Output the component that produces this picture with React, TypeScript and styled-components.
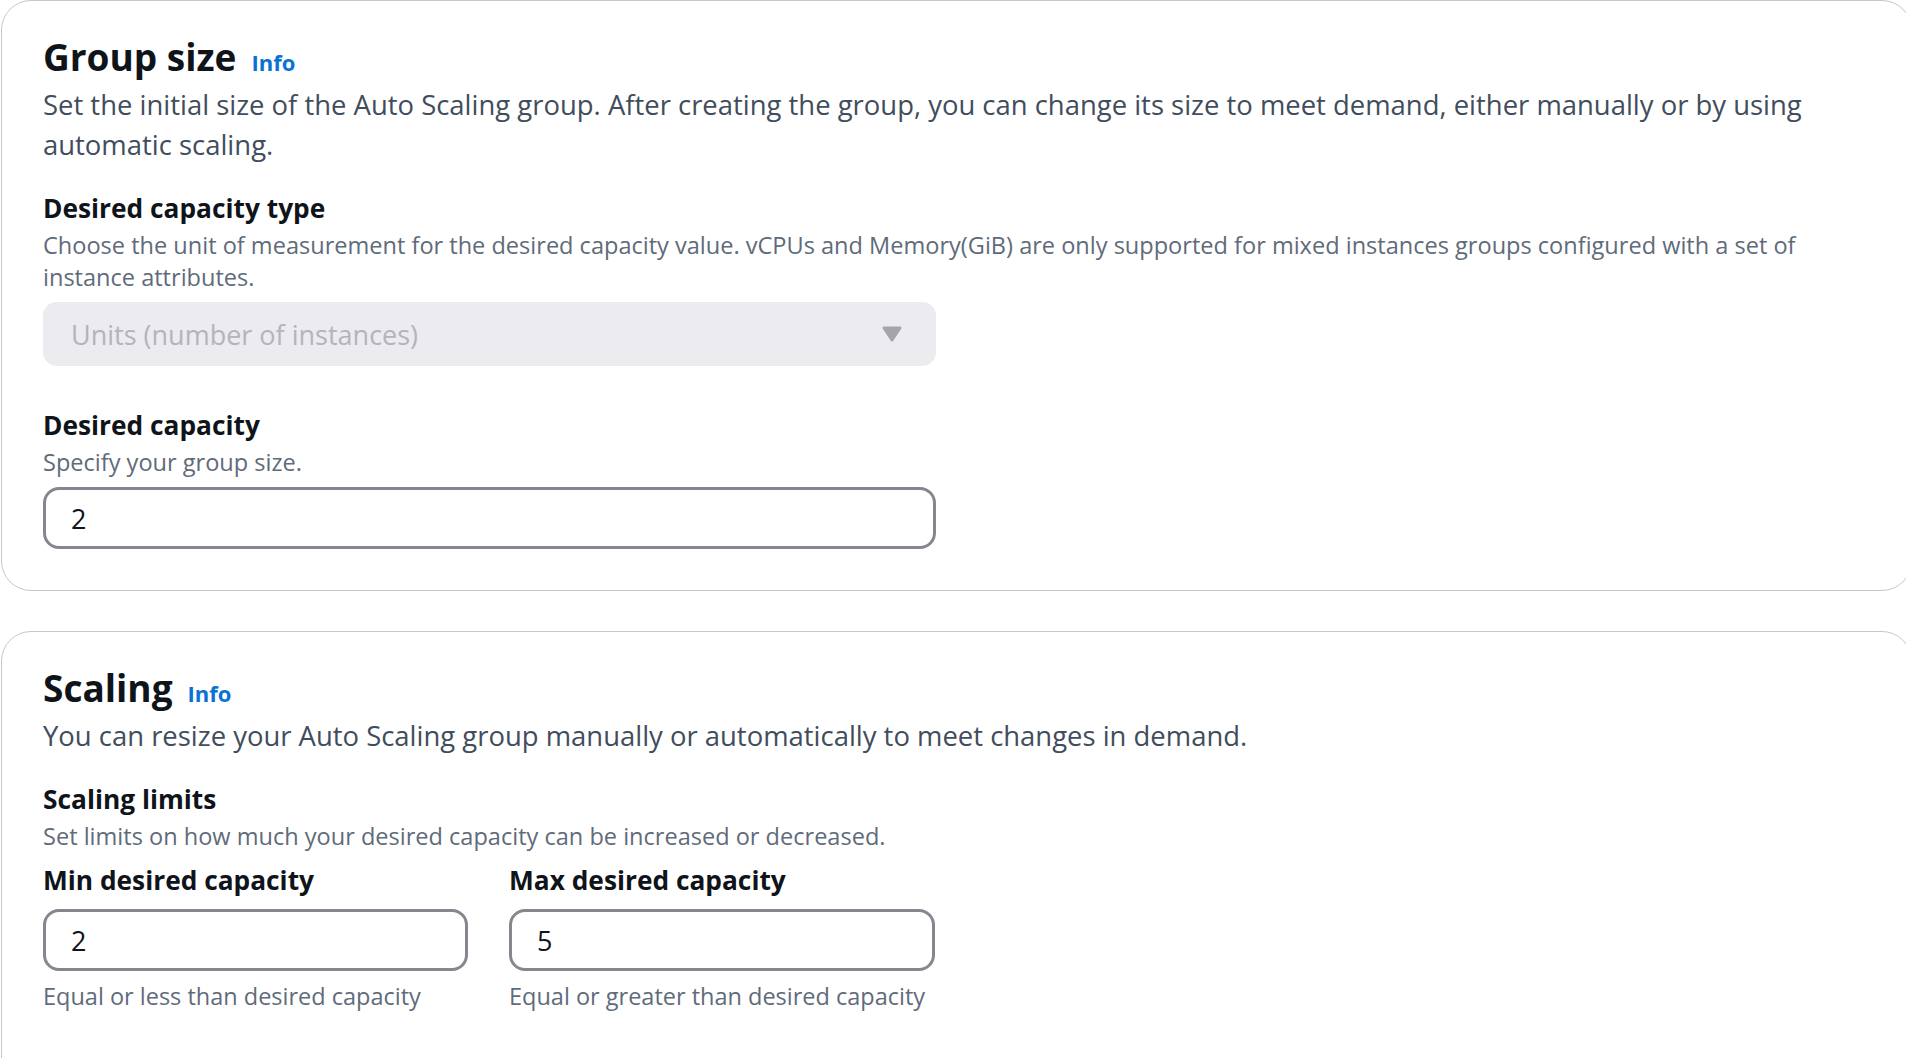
import styled, { createGlobalStyle } from "styled-components";

const GlobalStyle = createGlobalStyle`
  body {
    margin: 0;
    background: #ffffff;
    font-family: "Open Sans", "Noto Sans", Arial, sans-serif;
    color: #0f141a;
    overflow: hidden;
  }
`;

const Page = styled.div`
  display: flex;
  flex-direction: column;
  gap: 40px;
  height: 100vh;
  overflow: hidden;
  padding-left: 1px;
`;

const Card = styled.section<{ $bottom?: number }>`
  flex-shrink: 0;
  box-sizing: border-box;
  width: calc(100% + 6px);
  background: #ffffff;
  border: 1px solid #c6c6cd;
  border-radius: 30px;
  padding: 34px 44px ${(p) => p.$bottom ?? 41}px 41px;
`;

const HeaderRow = styled.div`
  display: flex;
  align-items: baseline;
  gap: 15px;
`;

const Title = styled.h2`
  margin: 0;
  font-size: 37px;
  line-height: 44px;
  font-weight: 700;
  color: #0f141a;
`;

const InfoLink = styled.a`
  font-size: 22px;
  font-weight: 700;
  color: #0972d3;
  text-decoration: none;
  cursor: pointer;
`;

const HeaderDescription = styled.p`
  margin: 6px 0 0;
  font-size: 27.45px;
  line-height: 40px;
  color: #414d5c;
`;

const Field = styled.div<{ $gap: number }>`
  margin-top: ${(p) => p.$gap}px;
`;

const FieldLabel = styled.div`
  font-size: 26.3px;
  line-height: 30px;
  font-weight: 700;
  color: #0f141a;
`;

const FieldDescription = styled.div`
  margin-top: 6px;
  font-size: 23.55px;
  line-height: 32px;
  color: #5f6b7a;
`;

const ControlSlot = styled.div<{ $gap: number }>`
  margin-top: ${(p) => p.$gap}px;
`;

const DisabledSelect = styled.div`
  box-sizing: border-box;
  width: 893px;
  height: 64px;
  display: flex;
  align-items: center;
  justify-content: space-between;
  padding: 0 34px 0 28px;
  background: #ebebf0;
  border-radius: 14px;
  font-size: 27px;
  color: #b4b4bb;
`;

const TextInput = styled.input<{ $width: number }>`
  box-sizing: border-box;
  display: block;
  width: ${(p) => p.$width}px;
  height: 62px;
  padding: 0 25px;
  border: 3px solid #86868e;
  border-radius: 16px;
  background: #ffffff;
  font-family: inherit;
  font-size: 27px;
  color: #0f141a;
  outline: none;
`;

const LimitsGrid = styled.div`
  display: grid;
  grid-template-columns: 425px 426px;
  column-gap: 41px;
  margin-top: 13px;
`;

const FieldHint = styled.div`
  margin-top: 9px;
  font-size: 23.5px;
  line-height: 32px;
  color: #5f6b7a;
`;

const Caret = () => (
  <svg width="20" height="16" viewBox="0 0 20 16">
    <polygon
      points="2,2 18,2 10,14"
      fill="#a4a4ad"
      stroke="#a4a4ad"
      strokeWidth="3"
      strokeLinejoin="round"
    />
  </svg>
);

export default function App() {
  return (
    <>
      <GlobalStyle />
      <Page>
        <Card>
          <HeaderRow>
            <Title>Group size</Title>
            <InfoLink>Info</InfoLink>
          </HeaderRow>
          <HeaderDescription>
            Set the initial size of the Auto Scaling group. After creating the group, you can change its size
            to meet demand, either manually or by using automatic scaling.
          </HeaderDescription>

          <Field $gap={28}>
            <FieldLabel>Desired capacity type</FieldLabel>
            <FieldDescription>
              Choose the unit of measurement for the desired capacity value. vCPUs and Memory(GiB) are only
              supported for mixed instances groups configured with a set of instance attributes.
            </FieldDescription>
            <ControlSlot $gap={9}>
              <DisabledSelect>
                <span>Units (number of instances)</span>
                <Caret />
              </DisabledSelect>
            </ControlSlot>
          </Field>

          <Field $gap={44}>
            <FieldLabel>Desired capacity</FieldLabel>
            <FieldDescription>Specify your group size.</FieldDescription>
            <ControlSlot $gap={9}>
              <TextInput $width={893} defaultValue="2" />
            </ControlSlot>
          </Field>
        </Card>

        <Card $bottom={120}>
          <HeaderRow>
            <Title>Scaling</Title>
            <InfoLink>Info</InfoLink>
          </HeaderRow>
          <HeaderDescription>
            You can resize your Auto Scaling group manually or automatically to meet changes in demand.
          </HeaderDescription>

          <Field $gap={28}>
            <FieldLabel>Scaling limits</FieldLabel>
            <FieldDescription>Set limits on how much your desired capacity can be increased or decreased.</FieldDescription>
          </Field>

          <LimitsGrid>
            <div>
              <FieldLabel>Min desired capacity</FieldLabel>
              <ControlSlot $gap={14}>
                <TextInput $width={425} defaultValue="2" />
              </ControlSlot>
              <FieldHint>Equal or less than desired capacity</FieldHint>
            </div>
            <div>
              <FieldLabel>Max desired capacity</FieldLabel>
              <ControlSlot $gap={14}>
                <TextInput $width={426} defaultValue="5" />
              </ControlSlot>
              <FieldHint>Equal or greater than desired capacity</FieldHint>
            </div>
          </LimitsGrid>
        </Card>
      </Page>
    </>
  );
}
